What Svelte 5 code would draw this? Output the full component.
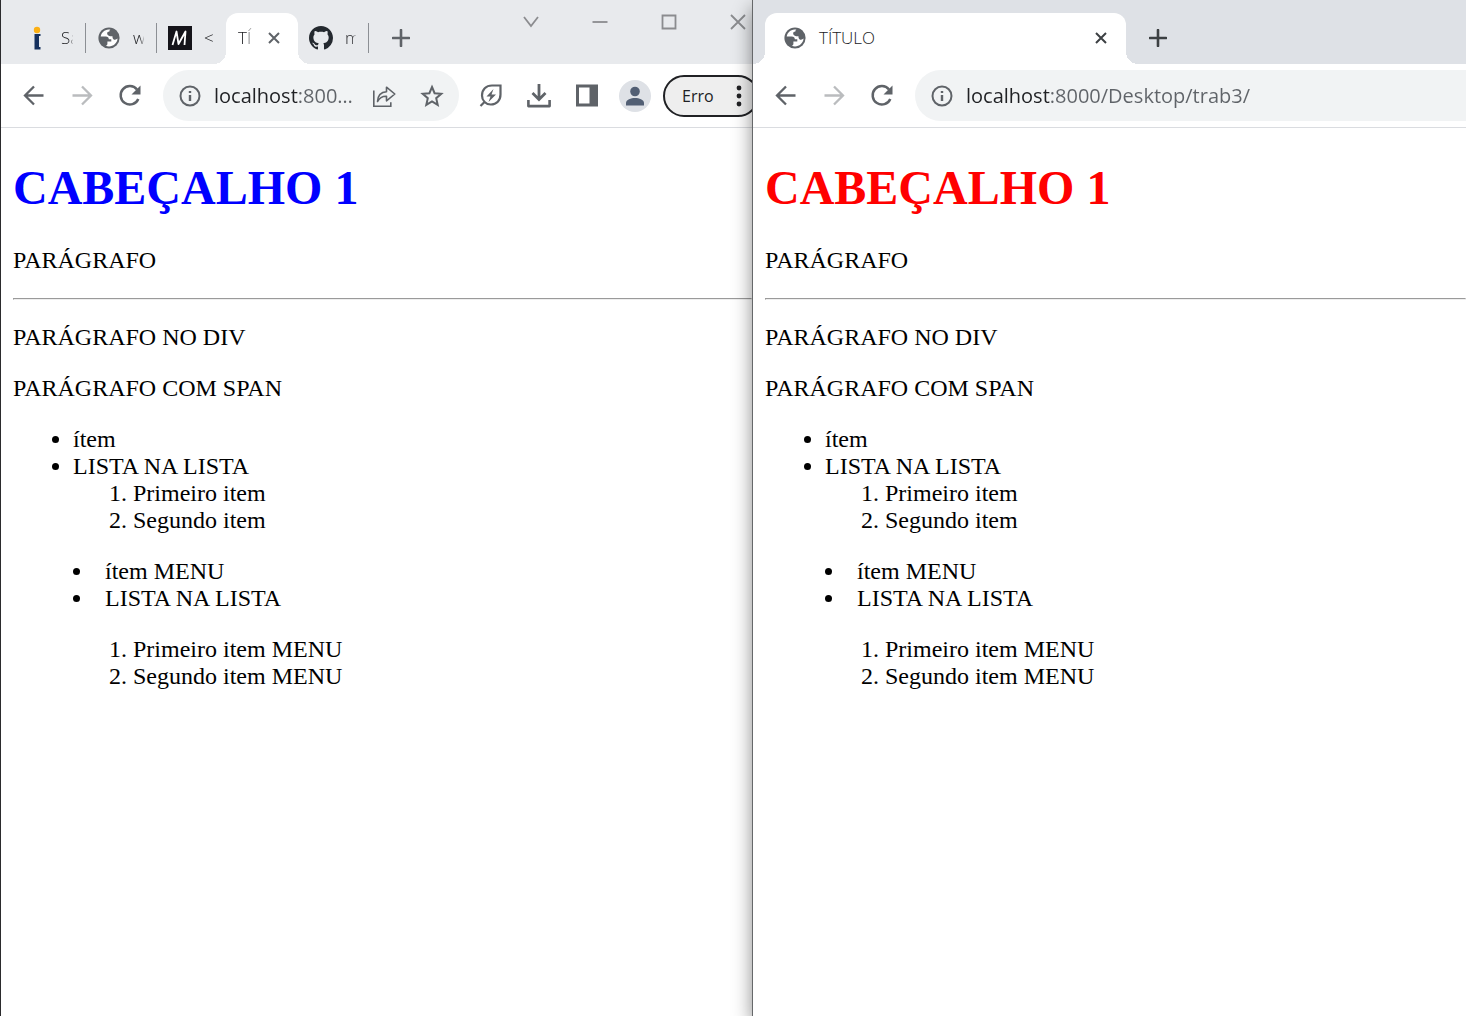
<script>
  const address = 'localhost:8000/Desktop/trab3/';
  const windows = [
    { id: 'left', tone: 'blue', compact: true },
    { id: 'right', tone: 'red', compact: false }
  ];
</script>

{#snippet globe()}
  <svg class="favicon" viewBox="0 0 24 24" aria-hidden="true">
    <circle cx="12" cy="12" r="10.6" fill="#5f6368" />
    <path fill="#fff" d="M11.5 3.400C7.400 3.600 4.300 6.600 3.700 10.500h5.100c1.900 0 3 1.100 3 2.700h2.500v2.200h-3.900v2.600c0 .9-.6 1.500-1.600 1.800 4.900 2.300 11.300-1.200 11.800-7.200-1.200 1.200-3 1.500-4.200.6-.9-.7-.9-1.900-.9-2.900-2.300.2-4.900-.6-5.300-2.400-.3-1.600.9-2.200 2.200-2.300 0-1 .3-1.600 1-2.100z" />
  </svg>
{/snippet}

{#snippet cross()}
  <svg class="small" viewBox="0 0 12 12" aria-hidden="true">
    <path d="M1 1l10 10M11 1L1 11" fill="none" stroke="currentColor" stroke-width="2" />
  </svg>
{/snippet}

{#snippet plus()}
  <svg class="plus" viewBox="0 0 18 18" aria-hidden="true">
    <path d="M9 1v16M1 9h16" fill="none" stroke="currentColor" stroke-width="2.6" stroke-linecap="round" />
  </svg>
{/snippet}

<div class="desktop">
  {#each windows as win (win.id)}
    <section class="window {win.id}" aria-label="TÍTULO">
      <header class="strip">
        {#if win.compact}
          <button class="tab" aria-label="Sa">
            <svg class="favicon" viewBox="0 0 24 24" aria-hidden="true">
              <circle cx="12" cy="4" r="3.200" fill="#fbb014" />
              <path d="M9.500 8h6v2h-1.500v11h1.500v2.500h-6z" fill="#15305e" />
            </svg>
            <span class="label">Sa</span>
          </button>
          <button class="tab" aria-label="w">{@render globe()}<span class="label">w</span></button>
          <button class="tab last" aria-label="<">
            <svg class="favicon" viewBox="0 0 24 24" aria-hidden="true">
              <path fill="#15141a" d="M0 0h24v24H0z" />
              <path d="M4.500 19L8.500 5.500l1.500 12L16.500 5.500M13.500 19L17.500 5.500V19" fill="none" stroke="none" />
              <path d="M4.500 19L8.500 5.500l2 12.500L17.500 5.500 16.500 19" fill="none" stroke="#fff" stroke-width="1.800" stroke-linejoin="round" />
            </svg>
            <span class="label">&lt;</span>
          </button>
          <div class="tab active">
            <span class="label">TÍ</span>
            <button class="close" aria-label="Fechar guia">{@render cross()}</button>
          </div>
          <button class="tab after" aria-label="m">
            <svg class="favicon" viewBox="0 0 16 16" aria-hidden="true">
              <path fill="#24292f" d="M8 0C3.580 0 0 3.580 0 8c0 3.540 2.290 6.530 5.470 7.590.4.070.55-.17.55-.38 0-.19-.01-.82-.01-1.490-2.010.37-2.530-.49-2.690-.94-.09-.23-.48-.94-.82-1.130-.28-.15-.68-.52-.01-.53.63-.01 1.080.58 1.230.82.72 1.210 1.870.87 2.330.66.070-.52.28-.87.51-1.070-1.780-.2-3.640-.89-3.640-3.950 0-.87.31-1.590.82-2.150-.08-.2-.36-1.020.08-2.120 0 0 .67-.21 2.200.82.64-.18 1.320-.27 2-.27s1.360.09 2 .27c1.530-1.040 2.200-.82 2.200-.82.44 1.100.16 1.920.08 2.120.51.56.82 1.270.82 2.150 0 3.070-1.870 3.750-3.650 3.950.29.25.54.73.54 1.480 0 1.070-.01 1.930-.01 2.200 0 .21.15.46.55.38A8.010 8.010 0 0016 8c0-4.420-3.580-8-8-8z" />
            </svg>
            <span class="label">m</span>
          </button>
          <button class="new" aria-label="Nova guia">{@render plus()}</button>
          <div class="controls">
            <button aria-label="Pesquisar guias"><svg viewBox="0 0 16 16"><path d="M1 3l7 9 7-9" /></svg></button>
            <button aria-label="Minimizar"><svg viewBox="0 0 16 16"><path d="M0.500 8h15" /></svg></button>
            <button aria-label="Maximizar"><svg viewBox="0 0 16 16"><path d="M1.500 1.500h13v13h-13z" /></svg></button>
            <button aria-label="Fechar"><svg viewBox="0 0 16 16"><path d="M1 1l14 14M15 1L1 15" /></svg></button>
          </div>
        {:else}
          <div class="tab active">
            {@render globe()}
            <span class="label">TÍTULO</span>
            <button class="close" aria-label="Fechar guia">{@render cross()}</button>
          </div>
          <button class="new" aria-label="Nova guia">{@render plus()}</button>
        {/if}
      </header>

      <nav class="toolbar" aria-label="Navegação">
        <button class="tool" aria-label="Voltar">
          <svg viewBox="0 0 24 24"><path d="M21.500 11.500H3.500M12 2.500L3 11.500l9 9" fill="none" stroke="currentColor" stroke-width="2.300" /></svg>
        </button>
        <button class="tool" aria-label="Avançar" disabled>
          <svg viewBox="0 0 24 24"><path d="M2.500 11.500h18M12 2.500l9 9-9 9" fill="none" stroke="currentColor" stroke-width="2.300" /></svg>
        </button>
        <button class="tool" aria-label="Recarregar">
          <svg viewBox="0 0 24 24"><path d="M20.300 15A9.200 9.200 0 1 1 19 5.500" fill="none" stroke="currentColor" stroke-width="2.500" /><path d="M22.500 1.500v9h-9z" fill="currentColor" /></svg>
        </button>
        <div class="omnibox">
          <svg class="info" viewBox="0 0 22 22" aria-hidden="true">
            <circle cx="11" cy="11" r="9.500" fill="none" stroke="currentColor" stroke-width="2" />
            <path d="M11 10v6M11 6v2" stroke="currentColor" stroke-width="2.400" />
          </svg>
          <input type="text" aria-label="Barra de endereço" value={address} />
          {#if win.compact}
            <button class="tool" aria-label="Compartilhar">
              <svg viewBox="0 0 24 24" fill="none" stroke="currentColor" stroke-width="1.600"><path d="M1.800 6.500v15.700h17v-4" /><path d="M5.500 17.500c.3-6 3.500-9.500 9-9.800V3.200L22.800 10l-8.300 6.800v-4.500c-4.500-.2-7 1.500-9 5.200z" stroke-linejoin="round" /></svg>
            </button>
            <button class="tool" aria-label="Adicionar aos favoritos">
              <svg viewBox="0 0 24 24"><path d="M12 3l2.600 6.200 6.700.6-5.100 4.400 1.500 6.600L12 17.300l-5.700 3.500 1.500-6.600-5.100-4.400 6.700-.6z" fill="none" stroke="currentColor" stroke-width="2" /></svg>
            </button>
          {/if}
        </div>
        {#if win.compact}
          <div class="actions">
            <button class="tool" aria-label="Economia de energia">
              <svg viewBox="0 0 24 24"><path d="M21.500 1.500v9c0 6-4 10-9.500 10A8.800 8.800 0 0 1 3 11.500c0-6 4-10 10-10zM1.500 22L6 17.500" fill="none" stroke="currentColor" stroke-width="2.200" /><path d="M14.500 5l-7 7.500h4l-2 5.500 7.500-7.500h-4.500z" fill="currentColor" /></svg>
            </button>
            <button class="tool" aria-label="Downloads">
              <svg viewBox="0 0 24 24"><path d="M12 0v15M5.500 9L12 15.500 18.500 9" fill="none" stroke="currentColor" stroke-width="2.800" /><path d="M1.400 16v6.100h21.200V16" fill="none" stroke="currentColor" stroke-width="2.600" stroke-linejoin="round" /></svg>
            </button>
            <button class="tool" aria-label="Painel lateral">
              <svg viewBox="0 0 24 24"><path d="M1 .5h22v22H1zM4 3.500v16h10.500v-16z" fill="currentColor" fill-rule="evenodd" /></svg>
            </button>
            <button class="tool avatar" aria-label="Perfil">
              <svg viewBox="0 0 24 24"><circle cx="12" cy="7.500" r="4.800" fill="#525f74" /><path d="M3 21.500v-2.500c0-3.500 5-5 9-5s9 1.500 9 5v2.500z" fill="#525f74" /></svg>
            </button>
          </div>
          <button class="error">
            <span>Erro</span>
            <svg viewBox="0 0 6 22" aria-hidden="true"><circle cx="3" cy="3" r="2.400" /><circle cx="3" cy="11" r="2.400" /><circle cx="3" cy="19" r="2.400" /></svg>
          </button>
        {/if}
      </nav>

      <main class="page">
        <h1 class={win.tone}>CABEÇALHO 1</h1>
        <p>PARÁGRAFO</p>
        <hr />
        <div><p>PARÁGRAFO NO DIV</p></div>
        <p><span>PARÁGRAFO COM SPAN</span></p>
        <ul>
          <li>ítem</li>
          <li>
            LISTA NA LISTA
            <ol>
              <li>Primeiro item</li>
              <li>Segundo item</li>
            </ol>
          </li>
        </ul>
        <menu>
          <li>ítem MENU</li>
          <li>
            LISTA NA LISTA
            <ol>
              <li>Primeiro item MENU</li>
              <li>Segundo item MENU</li>
            </ol>
          </li>
        </menu>
      </main>
    </section>
  {/each}
</div>

<style>
  :global(body) {
    margin: 0;
    background: #fff;
  }

  button {
    margin: 0;
    padding: 0;
    border: 0;
    background: none;
    color: inherit;
    font: inherit;
  }

  svg {
    display: block;
    flex: none;
  }

  .desktop {
    display: grid;
    grid-template-columns: 752fr 714fr;
    min-height: 100vh;
    overflow: hidden;
  }

  .window {
    min-width: 0;
    border-left: 1px solid #2b2b2d;
    background: #fff;
    color: #5f6368;
    font: 17px/24px "Open Sans", "Noto Sans", sans-serif;
  }

  .left {
    overflow: hidden;
    --strip: #e8eaed;
  }

  .right {
    position: relative;
    z-index: 1;
    border-left-color: #66686a;
    box-shadow: 0 8px 18px rgba(0, 0, 0, 0.45);
    --strip: #dee1e6;
  }

  .strip {
    display: flex;
    align-items: flex-end;
    height: 64px;
    background: var(--strip);
  }

  .tab {
    display: flex;
    flex: none;
    align-items: center;
    gap: 12px;
    box-sizing: border-box;
    height: 51px;
    padding-bottom: 1px;
    font-weight: 300;
  }

  .left .tab {
    width: 71px;
    padding-left: 11px;
  }

  .left .tab:first-child {
    width: 85px;
    padding-left: 24px;
  }

  .label {
    color: #202124;
  }

  .left .label {
    width: 14px;
    overflow: hidden;
    color: #202124;
    text-align: left;
    white-space: nowrap;
    mask-image: linear-gradient(to right, #000 60%, rgba(0, 0, 0, 0.2));
  }

  .left .tab:not(.active, .last)::after {
    content: '';
    width: 1px;
    height: 30px;
    background: #8c8f94;
  }

  .left .tab.last {
    width: 69px;
  }

  .tab.active {
    position: relative;
    border-radius: 12px 12px 0 0;
    background: #fff;
  }

  .left .tab.active {
    width: 72px;
    gap: 16px;
    padding-left: 12px;
  }

  .right .tab.active {
    width: 361px;
    margin-left: 12px;
    padding: 0 19px 1px 18px;
  }

  .tab.active::before,
  .tab.active::after {
    content: '';
    position: absolute;
    bottom: 0;
    width: 12px;
    height: 12px;
  }

  .tab.active::before {
    right: 100%;
    background: radial-gradient(circle at 0 0, transparent 12px, #fff 12px);
  }

  .tab.active::after {
    left: 100%;
    background: radial-gradient(circle at 100% 0, transparent 12px, #fff 12px);
  }

  .favicon {
    width: 24px;
    height: 24px;
  }

  .close {
    margin-left: auto;
  }

  .left .close {
    margin-left: 0;
  }

  .small {
    width: 12px;
    height: 12px;
  }

  .plus {
    width: 18px;
    height: 18px;
  }

  .new {
    display: flex;
    align-items: center;
    box-sizing: border-box;
    height: 51px;
    padding: 0 23px 1px;
  }

  .right .new,
  .right .close {
    color: #3c4043;
  }

  .controls {
    display: flex;
    align-self: flex-start;
    margin: 0 -20px 0 auto;
  }

  .controls button {
    display: grid;
    place-items: center;
    width: 69px;
    height: 44px;
  }

  .controls svg {
    width: 16px;
    height: 16px;
    fill: none;
    stroke: #8b8c8f;
    stroke-width: 1.8;
  }

  .toolbar {
    display: flex;
    align-items: center;
    gap: 16px;
    box-sizing: border-box;
    height: 64px;
    padding-left: 17px;
    border-bottom: 1px solid #dadce0;
  }

  .actions {
    display: flex;
    gap: 16px;
    margin-right: -4px;
  }

  .tool {
    display: grid;
    flex: none;
    place-items: center;
    width: 32px;
    height: 32px;
  }

  .tool svg {
    width: 24px;
    height: 24px;
  }

  .tool:disabled {
    color: #babcbe;
  }

  .omnibox {
    display: flex;
    flex: 1;
    align-items: center;
    gap: 13px;
    box-sizing: border-box;
    min-width: 0;
    height: 51px;
    margin-left: 1px;
    padding: 0 11px 0 16px;
    border-radius: 26px;
    background: #f1f3f4;
  }

  .right .omnibox {
    padding-right: 0;
    border-radius: 26px 0 0 26px;
  }

  .omnibox .tool + .tool {
    margin-left: 3px;
  }

  .info {
    width: 22px;
    height: 22px;
  }

  input {
    flex: 1;
    min-width: 0;
    height: 32px;
    padding: 0;
    border: 0;
    outline: 0;
    background: linear-gradient(to right, #202124 84px, #5f6368 84px);
    background-clip: text;
    color: transparent;
    font: 20px/32px "Open Sans", "Noto Sans", sans-serif;
    text-overflow: ellipsis;
  }

  .avatar {
    border-radius: 50%;
    background: #dee1e6;
  }

  .error {
    display: flex;
    flex: none;
    align-items: center;
    justify-content: space-between;
    box-sizing: border-box;
    width: 96px;
    height: 42px;
    margin-right: -7px;
    padding: 0 15px 0 17px;
    border: 2px solid #202124;
    border-radius: 21px;
    background: #eee;
    color: #202124;
    font-size: 16px;
  }

  .error svg {
    width: 6px;
    height: 22px;
    fill: #202124;
  }

  .page {
    padding: 32px 0 24px 12px;
    color: #000;
    font: 24px/27px "Liberation Serif", serif;
  }

  h1 {
    margin: 0 0 32px;
    font-size: 48px;
    line-height: 55px;
  }

  .blue {
    color: #00f;
  }

  .red {
    color: #f00;
  }

  p,
  hr,
  ul,
  menu {
    margin: 24px 0;
  }

  hr {
    border: 1px solid;
    border-color: #9a9a9a #eee #eee #9a9a9a;
  }

  ul,
  menu,
  ol {
    padding-left: 60px;
  }

  ul ol {
    margin: 0;
  }

  menu {
    list-style-position: inside;
  }

  menu ol {
    margin: 24px 0;
    list-style-position: outside;
  }
</style>
